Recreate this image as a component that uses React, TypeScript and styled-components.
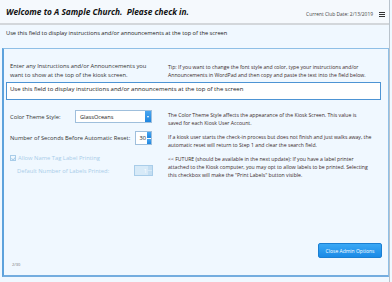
import React from "react";
import styled, { createGlobalStyle } from "styled-components";

const Global = createGlobalStyle`
  html, body { margin: 0; padding: 0; background: #f0f8ff; }
  body { font-family: "Open Sans", "Noto Sans", sans-serif; color: #333; }
`;

const Page = styled.div`
  width: 390px;
  height: 282px;
  border-right: 1px solid #b9c3cc;
  display: flex;
  flex-direction: column;
  box-sizing: border-box;
`;

const Header = styled.div`
  height: 23px;
  display: flex;
  align-items: center;
  justify-content: space-between;
  padding: 0 4px 0 6px;
  background: #f5f9fd;
  border-bottom: 2px solid #d3d7db;
`;

const Title = styled.div`
  font-weight: 700;
  font-style: italic;
  font-size: 8.3px;
  color: #111;
  white-space: pre;
`;

const HeaderRight = styled.div`
  display: flex;
  align-items: center;
  gap: 6px;
  font-size: 4.9px;
  color: #444;
  padding-top: 5px;
`;

const Burger = styled.div`
  width: 6px;
  display: flex;
  flex-direction: column;
  gap: 1px;
  span { height: 1px; background: #333; display: block; }
`;

const Band = styled.div`
  height: 23px;
  box-sizing: border-box;
  padding: 5px 0 0 6px;
  font-size: 5.7px;
  line-height: 6px;
  color: #222;
  white-space: nowrap;
`;

const Panel = styled.div`
  margin-left: 2px;
  width: 387px;
  height: 229px;
  border: 1px solid #8fbfe6;
  border-left: 2px solid #5da2dc;
  border-bottom: 2px solid #74addf;
  background: #f0f8ff;
  box-sizing: border-box;
  padding: 13px 6px 0 2px;
  display: flex;
  flex-direction: column;
`;

const Row = styled.div<{ $mt?: number }>`
  display: grid;
  grid-template-columns: 158px 1fr;
  align-items: start;
  padding-left: 4px;
  margin-top: ${(p) => p.$mt ?? 0}px;
`;

const LeftText = styled.div`
  font-size: 5.8px;
  line-height: 9px;
  color: #333;
  white-space: nowrap;
`;

const Tip = styled.div<{ $pt?: number }>`
  font-size: 5.15px;
  line-height: 8px;
  color: #3a2a2a;
  padding-top: ${(p) => p.$pt ?? 0}px;
  white-space: nowrap;
`;

const BigInput = styled.div`
  margin-top: 2px;
  height: 18px;
  width: 375px;
  box-sizing: border-box;
  border: 1px solid #4d94d4;
  background: #fff;
  font-size: 6px;
  line-height: 6px;
  padding: 3px 3px 0;
  color: #222;
  white-space: nowrap;
`;

const Field = styled.div<{ $mt?: number }>`
  display: flex;
  align-items: center;
  margin-top: ${(p) => p.$mt ?? 0}px;
`;

const Label = styled.div<{ $w: number; $disabled?: boolean; $indent?: number }>`
  width: ${(p) => p.$w}px;
  padding-left: ${(p) => p.$indent ?? 0}px;
  font-size: 5.8px;
  color: ${(p) => (p.$disabled ? "#a9cde9" : "#333")};
  white-space: nowrap;
`;

const Select = styled.div`
  width: 77px;
  height: 13px;
  box-sizing: border-box;
  border: 1px solid #9fbfdc;
  background: #fff;
  display: flex;
  align-items: center;
  justify-content: space-between;
  font-size: 5.6px;
  padding-left: 4px;
  color: #222;
`;

const ArrowBtn = styled.div`
  width: 6px;
  height: 11px;
  background: linear-gradient(#49a6f0, #1f86e0);
  display: flex;
  align-items: center;
  justify-content: center;
  &::after {
    content: "";
    border-left: 1.5px solid transparent;
    border-right: 1.5px solid transparent;
    border-top: 2px solid #fff;
  }
`;

const Spin = styled.div<{ $disabled?: boolean }>`
  width: ${(p) => (p.$disabled ? 19 : 17)}px;
  height: ${(p) => (p.$disabled ? 11 : 14)}px;
  box-sizing: border-box;
  border: 1px solid ${(p) => (p.$disabled ? "#a9cde9" : "#9fbfdc")};
  background: ${(p) => (p.$disabled ? "#d7eaf8" : "#fff")};
  display: flex;
  align-items: center;
  justify-content: flex-end;
  font-size: 5.6px;
  color: ${(p) => (p.$disabled ? "#fff" : "#222")};
`;

const SpinBtns = styled.div<{ $disabled?: boolean }>`
  width: 4px;
  height: 100%;
  margin-left: 1px;
  display: flex;
  flex-direction: column;
  gap: 1px;
  span {
    flex: 1;
    background: ${(p) => (p.$disabled ? "#c4def2" : "linear-gradient(#49a6f0, #1f86e0)")};
  }
`;

const Check = styled.div`
  display: flex;
  align-items: center;
  gap: 2px;
  height: 8px;
  font-size: 5.8px;
  color: #a9cde9;
`;

const Box = styled.div`
  width: 4px;
  height: 4px;
  border: 1px solid #a9cde9;
  position: relative;
  &::after {
    content: "";
    position: absolute;
    left: 1px;
    top: -0.5px;
    width: 1.5px;
    height: 3px;
    border-right: 1px solid #a9cde9;
    border-bottom: 1px solid #a9cde9;
    transform: rotate(40deg);
  }
`;

const Footer = styled.div`
  margin-top: auto;
  display: flex;
  justify-content: space-between;
  align-items: flex-end;
  padding-left: 6px;
`;

const Small = styled.div`
  font-size: 4px;
  line-height: 5px;
  color: #777;
  padding-bottom: 8px;
`;

const Button = styled.div`
  margin-bottom: 17px;
  height: 15px;
  width: 64px;
  box-sizing: border-box;
  border-radius: 2px;
  background: linear-gradient(#3aa8f5, #1a8ae6);
  border: 1px solid #1b7fd2;
  color: #fff;
  font-size: 5px;
  display: flex;
  align-items: center;
  justify-content: center;
`;

export default function App() {
  return (
    <Page>
      <Global />
      <Header>
        <Title>{"Welcome to A Sample Church.  Please check in."}</Title>
        <HeaderRight>
          <span>Current Club Date: 2/13/2019</span>
          <Burger>
            <span />
            <span />
            <span />
          </Burger>
        </HeaderRight>
      </Header>
      <Band>Use this field to display instructions and/or announcements at the top of the screen</Band>
      <Panel>
        <Row>
          <LeftText>
            Enter any Instructions and/or Announcements you
            <br />
            want to show at the top of the kiosk screen.
          </LeftText>
          <Tip $pt={1}>
            Tip: If you want to change the font style and color, type your instructions and/or
            <br />
            Announcements in WordPad and then copy and paste the text into the field below.
          </Tip>
        </Row>
        <BigInput>Use this field to display instructions and/or announcements at the top of the screen</BigInput>
        <Row $mt={10}>
          <Field>
            <Label $w={65}>Color Theme Style:</Label>
            <Select>
              GlassOceans
              <ArrowBtn />
            </Select>
          </Field>
          <Tip $pt={1}>
            The Color Theme Style affects the appearance of the Kiosk Screen. This value is
            <br />
            saved for each Kiosk User Account.
          </Tip>
        </Row>
        <Row $mt={4}>
          <Field>
            <Label $w={125}>Number of Seconds Before Automatic Reset:</Label>
            <Spin>
              30
              <SpinBtns>
                <span />
                <span />
              </SpinBtns>
            </Spin>
          </Field>
          <Tip $pt={2}>
            If a kiosk user starts the check-in process but does not finish and just walks away, the
            <br />
            automatic reset will return to Step 1 and clear the search field.
          </Tip>
        </Row>
        <Row $mt={5}>
          <div>
            <Check>
              <Box />
              Allow Name Tag Label Printing
            </Check>
            <Field $mt={3}>
              <Label $w={117} $indent={7} $disabled>
                Default Number of Labels Printed:
              </Label>
              <Spin $disabled>
                1
                <SpinBtns $disabled>
                  <span />
                  <span />
                </SpinBtns>
              </Spin>
            </Field>
          </div>
          <Tip $pt={1}>
            {"<< FUTURE (should be available in the next update): If you have a label printer"}
            <br />
            attached to the Kiosk computer, you may opt to allow labels to be printed. Selecting
            <br />
            this checkbox will make the "Print Labels" button visible.
          </Tip>
        </Row>
        <Footer>
          <Small>2/30</Small>
          <Button>Close Admin Options</Button>
        </Footer>
      </Panel>
    </Page>
  );
}
